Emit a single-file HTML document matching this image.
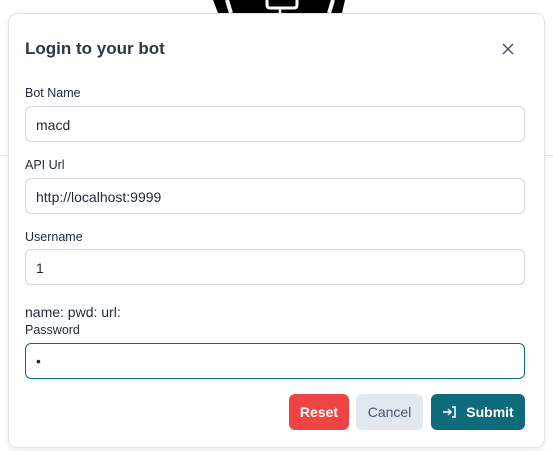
<!DOCTYPE html>
<html><head><style>
body{margin:0;width:553px;height:451px;background:#fff;font-family:"Liberation Sans",sans-serif;position:relative;overflow:hidden}
.line{position:absolute;left:0;right:0;top:155px;height:1px;background:#e5e7eb}
.dlg{position:absolute;left:8px;top:13px;width:535px;height:433px;background:#fff;border:1px solid #e2e5ea;border-radius:9px;box-shadow:0 2px 6px rgba(0,0,0,.08)}
h1{position:absolute;left:16px;top:25px;margin:0;font-size:17px;font-weight:bold;color:#2d3748}
.x{position:absolute;left:491px;top:27px}
label{position:absolute;left:16px;font-size:12.5px;color:#1f2937}
.in{position:absolute;left:16px;width:500px;height:36px;border:1px solid #d1d5db;border-radius:6px;box-sizing:border-box;font-size:14px;color:#1f2937;padding:10px 0 0 10px}
.btn{position:absolute;top:380px;height:36px;border-radius:6px;font-size:14px;font-weight:bold;display:flex;align-items:center;justify-content:center;box-sizing:border-box}
</style></head><body>
<svg style="position:absolute;left:200px;top:0" width="160" height="14" viewBox="0 0 160 14">
<path d="M13 0 L145 0 L142 13 L18 13 Z" fill="#000"/>
<path d="M27 0 Q29 7 31 13" stroke="#fff" stroke-width="4" fill="none"/>
<path d="M133 0 Q131 7 129 13" stroke="#fff" stroke-width="4" fill="none"/>
<path d="M67 0 V5 Q67 8 70 8 H94 Q97 8 97 5 V0" stroke="#fff" stroke-width="3" fill="none"/>
<path d="M80 8 V13" stroke="#fff" stroke-width="2.5"/>
<rect x="0" y="13" width="160" height="1" fill="#fff"/>
</svg>
<div class="line"></div>
<div class="dlg">
<h1>Login to your bot</h1>
<svg class="x" width="16" height="16" viewBox="0 0 16 16"><path d="M3 3L13 13M13 3L3 13" stroke="#4b5563" stroke-width="1.5"/></svg>
<label style="top:72px">Bot Name</label>
<div class="in" style="top:92px">macd</div>
<label style="top:144px">API Url</label>
<div class="in" style="top:164px">http://localhost:9999</div>
<label style="top:216px">Username</label>
<div class="in" style="top:235px">1</div>
<div style="position:absolute;left:16px;top:290px;font-size:14px;color:#1f2937">name: pwd: url:</div>
<label style="top:309px">Password</label>
<div class="in" style="top:329px;border-color:#0e6b7b;padding-top:9px">•</div>
<div class="btn" style="left:280px;width:60px;background:#ef4444;color:#fff">Reset</div>
<div class="btn" style="left:347px;width:67px;background:#e2e8f0;color:#4a5568;font-weight:normal">Cancel</div>
<div class="btn" style="left:422px;width:94px;background:#0e6b7b;color:#fff"><svg width="16" height="14" viewBox="0 0 16 14" style="margin-right:8px"><path d="M1 7H9M6 4L9 7L6 10M10 2H13V12H10" stroke="#fff" stroke-width="1.5" fill="none"/></svg>Submit</div>
</div>
</body></html>
